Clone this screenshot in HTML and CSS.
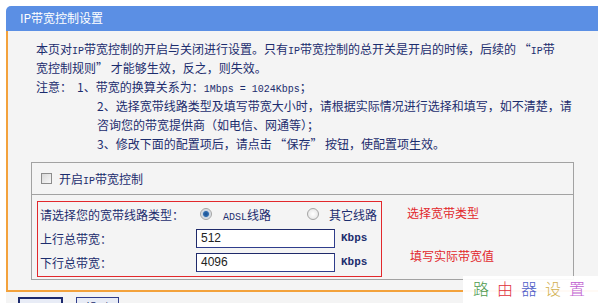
FILE: index.html
```html
<!DOCTYPE html>
<html lang="zh-CN">
<head>
<meta charset="utf-8">
<title>IP带宽控制设置</title>
<link rel="stylesheet" href="styles.css">
</head>
<body>
<div class="page">
  <div class="title">IP带宽控制设置</div>
  <div class="panel">
    <div class="intro">
      <div class="line">本页对<span class="m">IP</span>带宽控制的开启与关闭进行设置。只有<span class="m">IP</span>带宽控制的总开关是开启的时候，后续的 <span class="q">“</span><span class="m">IP</span>带</div>
      <div class="line">宽控制规则<span class="q">”</span> 才能够生效，反之，则失效。</div>
      <div class="line"><span class="note-label">注意：</span>1、带宽的换算关系为：<span class="m">1Mbps = 1024Kbps</span>；</div>
      <div class="line indent">2、选择宽带线路类型及填写带宽大小时，请根据实际情况进行选择和填写，如不清楚，请</div>
      <div class="line indent">咨询您的带宽提供商（如电信、网通等）；</div>
      <div class="line indent">3、修改下面的配置项后，请点击 <span class="q">“</span>保存<span class="q">”</span> 按钮，使配置项生效。</div>
    </div>
    <div class="group">
      <div class="group-head">
        <span class="checkbox"></span>
        <span>开启<span class="m">IP</span>带宽控制</span>
      </div>
      <div class="group-body">
        <div class="redbox">
          <div class="row">
            <div class="label">请选择您的宽带线路类型：</div>
            <div class="field">
              <span class="radio checked"></span>
              <span class="opt"><span class="m">ADSL</span>线路</span>
              <span class="radio second"></span>
              <span class="opt">其它线路</span>
            </div>
          </div>
          <div class="row">
            <div class="label">上行总带宽：</div>
            <div class="field">
              <span class="input">512</span>
              <span class="unit">Kbps</span>
            </div>
          </div>
          <div class="row">
            <div class="label">下行总带宽：</div>
            <div class="field">
              <span class="input">4096</span>
              <span class="unit">Kbps</span>
            </div>
          </div>
        </div>
        <div class="notes">
          <div class="note note1">选择宽带类型</div>
          <div class="note note2">填写实际带宽值</div>
        </div>
      </div>
    </div>
  </div>
  <div class="buttons">
    <span class="btn primary">保 存</span>
    <span class="btn">帮 助</span>
  </div>
</div>
<div class="watermark"><span class="c1">路</span><span class="c2">由</span><span class="c3">器</span><span class="c4">设</span><span class="c5">置</span></div>
</body>
</html>
```

FILE: styles.css
```css
html, body {
  margin: 0;
  padding: 0;
  background: #ffffff;
  overflow: hidden;
}
body {
  width: 598px;
  height: 303px;
  position: relative;
  font-family: "Noto Sans CJK SC", "Noto Sans", sans-serif;
  font-size: 12px;
  color: #1c2d6e;
}
.page {
  margin: 6px 0 0 6px;
  width: 592px;
}
.title {
  height: 25px;
  line-height: 24px;
  background: #5b8fe4;
  color: #ffffff;
  padding-left: 14px;
  border-top-left-radius: 5px;
}
.panel {
  background: #f4f4f4;
  border-left: 2px solid #f3a23c;
  border-bottom: 2px solid #f3a23c;
  padding: 8px 0 10px 0;
}
.intro {
  padding-left: 28px;
}
.line {
  height: 19px;
  line-height: 19px;
  white-space: nowrap;
}
.indent {
  padding-left: 61px;
}
.note-label {
  display: inline-block;
  width: 41px;
}
.q {
  font-feature-settings: "fwid" 1;
}
.m {
  font-family: "Liberation Mono", monospace;
  font-size: 10px;
}
.group {
  margin: 9px 0 0 23px;
  width: 541px;
  border: 1px solid #a2a2a2;
}
.group-head {
  height: 31px;
  display: flex;
  align-items: center;
  gap: 7px;
  padding-left: 9px;
  border-bottom: 1px solid #a2a2a2;
}
.checkbox {
  width: 9px;
  height: 9px;
  border: 1px solid #8c8c8c;
  background: linear-gradient(135deg, #d8d8d8, #f8f8f8);
}
.group-body {
  display: flex;
  padding: 6px 0 2px 5px;
}
.redbox {
  width: 341px;
  border: 1px solid #e2282c;
  padding: 0 0 2px 2px;
}
.row {
  height: 24px;
  display: flex;
  align-items: center;
}
.label {
  width: 156px;
}
.field {
  display: flex;
  align-items: center;
}
.radio {
  width: 10px;
  height: 10px;
  border: 1px solid #a4a4a4;
  border-radius: 50%;
  background: radial-gradient(circle, #ffffff 0, #e0e0e0 100%);
  margin-left: 4px;
  margin-right: 11px;
}
.radio.checked {
  background: radial-gradient(circle, #1c4f8e 0, #2e6cb0 2.5px, #c8d2de 3.5px, #f2f2f2 6px);
}
.radio.second {
  margin-left: 36px;
  margin-right: 10px;
}
.input {
  display: block;
  box-sizing: border-box;
  width: 139px;
  height: 19px;
  line-height: 17px;
  border: 1px solid #2f3d8c;
  border-top-color: #1f2a6a;
  border-left-color: #1f2a6a;
  background: #ffffff;
  color: #222222;
  padding-left: 4px;
  font-family: "Liberation Sans", "DejaVu Sans", sans-serif;
  font-size: 12px;
}
.unit {
  margin-left: 6px;
  font-family: "Liberation Mono", monospace;
  font-size: 11px;
  font-weight: bold;
}
.notes {
  margin-left: 25px;
  display: flex;
  flex-direction: column;
  color: #e2282c;
}
.note {
  line-height: 16px;
}
.note1 {
  margin-top: 4px;
}
.note2 {
  margin-top: 27px;
  margin-left: 3px;
}
.buttons {
  display: flex;
  gap: 13px;
  padding: 5px 0 0 12px;
  background: #f4f4f4;
  height: 30px;
}
.btn {
  box-sizing: border-box;
  width: 43px;
  height: 22px;
  border: 1px solid #2f3d8c;
  background: #e8ecf6;
  text-align: center;
  line-height: 20px;
}
.btn.primary {
  width: 45px;
  border: 2px solid #1c2a6e;
}
.watermark {
  position: absolute;
  right: 0;
  bottom: 0;
  width: 125px;
  height: 27px;
  padding-left: 10px;
  background: rgba(255, 255, 255, 0.95);
  font-size: 16px;
  font-weight: 300;
  line-height: 25px;
  letter-spacing: 8px;
  white-space: nowrap;
}
.c1 { color: #4e9a4e; }
.c2 { color: #e0303a; }
.c3 { color: #5060c8; }
.c4 { color: #d2b04e; }
.c5 { color: #c05ed0; }
```
